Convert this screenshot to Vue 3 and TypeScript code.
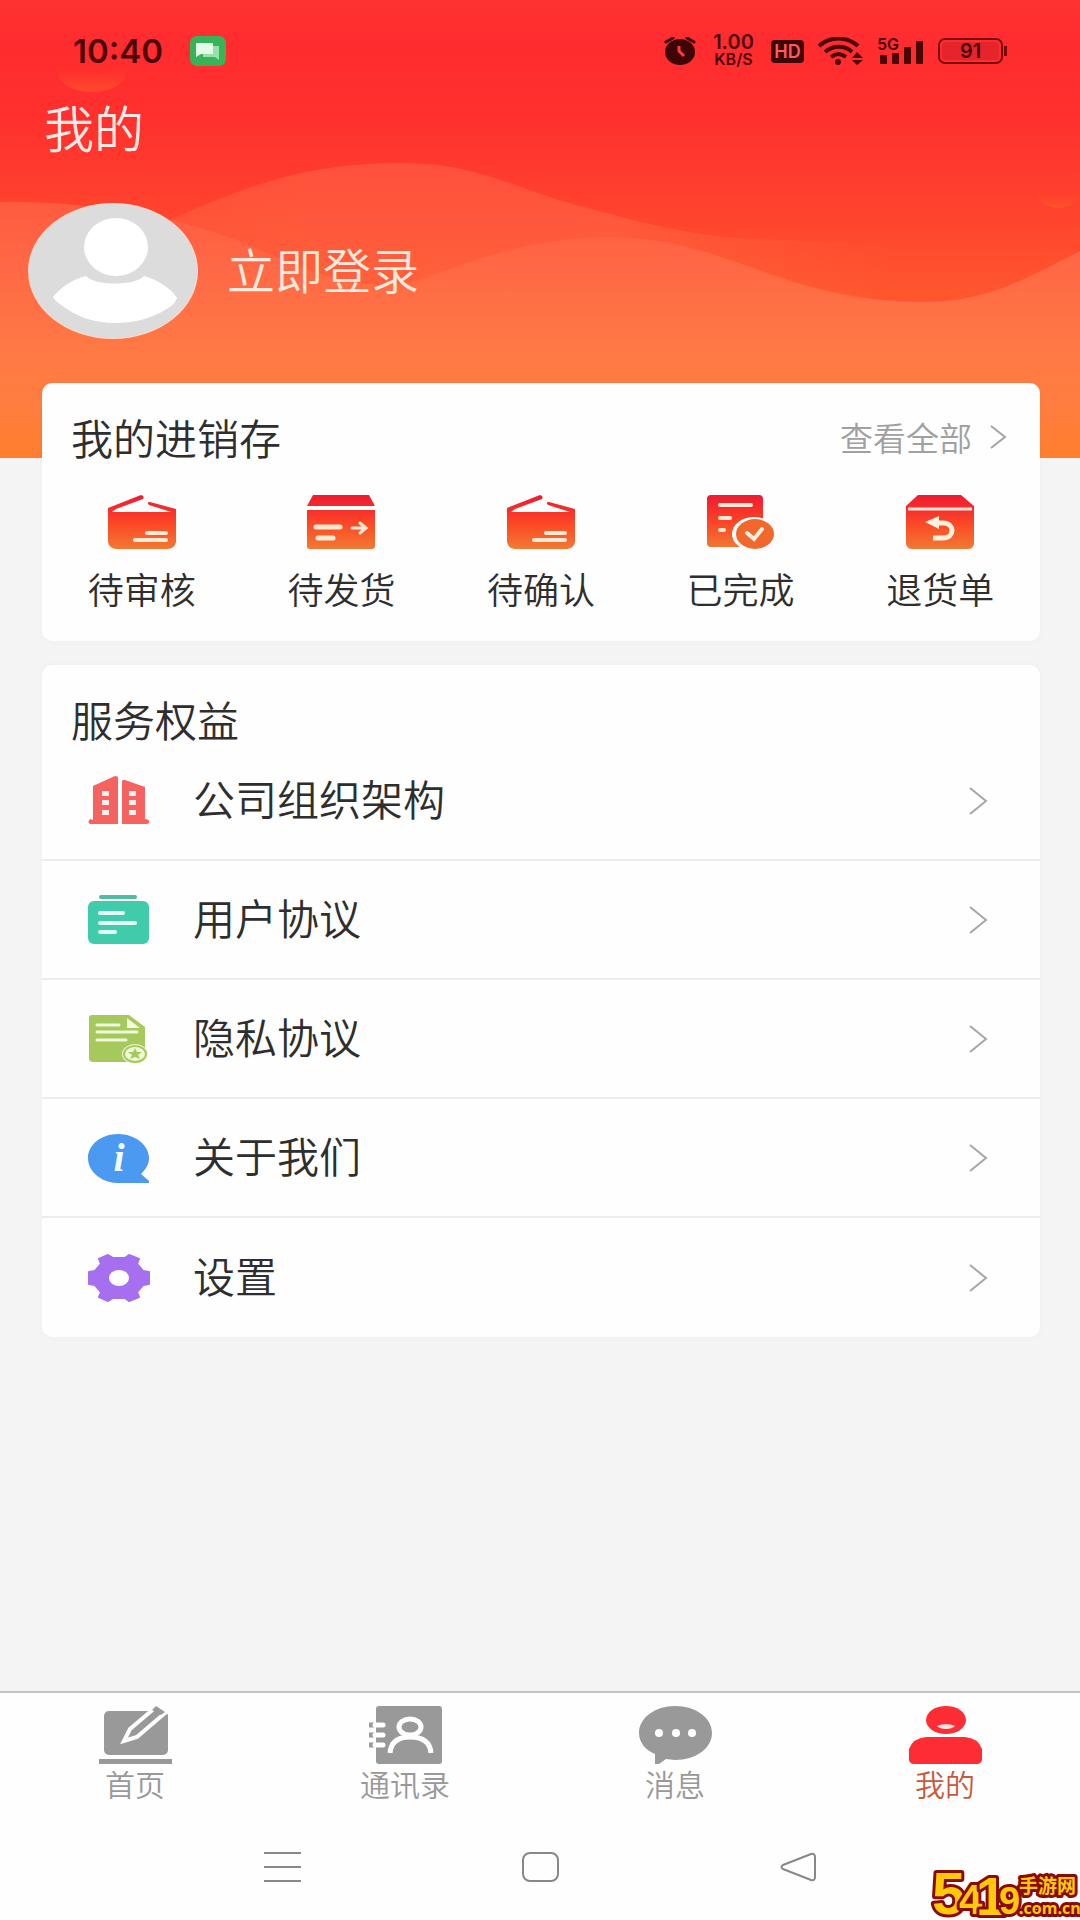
<script setup lang="ts">
type OrderIcon = 'box' | 'ship' | 'done' | 'back'
type ServiceIcon = 'company' | 'terms' | 'privacy' | 'about' | 'settings'
type TabIcon = 'home' | 'contacts' | 'chat' | 'me'

const orders: { label: string; icon: OrderIcon }[] = [
  { label: '待审核', icon: 'box' },
  { label: '待发货', icon: 'ship' },
  { label: '待确认', icon: 'box' },
  { label: '已完成', icon: 'done' },
  { label: '退货单', icon: 'back' },
]

const services: { label: string; icon: ServiceIcon }[] = [
  { label: '公司组织架构', icon: 'company' },
  { label: '用户协议', icon: 'terms' },
  { label: '隐私协议', icon: 'privacy' },
  { label: '关于我们', icon: 'about' },
  { label: '设置', icon: 'settings' },
]

const tabs: { label: string; icon: TabIcon; active?: boolean }[] = [
  { label: '首页', icon: 'home' },
  { label: '通讯录', icon: 'contacts' },
  { label: '消息', icon: 'chat' },
  { label: '我的', icon: 'me', active: true },
]
</script>

<template>
  <div class="app">
    <header class="hero">
      <svg class="hero-bg" viewBox="0 0 1080 458" preserveAspectRatio="none" aria-hidden="true">
        <defs>
          <linearGradient id="sky" x1="0" y1="0" x2="0" y2="458" gradientUnits="userSpaceOnUse">
            <stop offset="0" stop-color="#ff3232" />
            <stop offset="0.1" stop-color="#ff2c2f" />
            <stop offset="0.25" stop-color="#ff302e" />
            <stop offset="0.42" stop-color="#ff3f2d" />
            <stop offset="0.66" stop-color="#ff582d" />
            <stop offset="1" stop-color="#ff7e2d" />
          </linearGradient>
          <linearGradient id="hillFar" x1="150" y1="0" x2="930" y2="0" gradientUnits="userSpaceOnUse">
            <stop offset="0" stop-color="#ff7450" stop-opacity="0.3" />
            <stop offset="0.2" stop-color="#ff7450" stop-opacity="0.4" />
            <stop offset="0.6" stop-color="#ff7450" stop-opacity="0.4" />
            <stop offset="0.95" stop-color="#ff7450" stop-opacity="0" />
          </linearGradient>
          <linearGradient id="hillNear" x1="0" y1="200" x2="0" y2="458" gradientUnits="userSpaceOnUse">
            <stop offset="0" stop-color="#ff5a40" />
            <stop offset="0.25" stop-color="#ff6845" />
            <stop offset="0.6" stop-color="#ff7a45" />
            <stop offset="0.78" stop-color="#ff7d40" />
            <stop offset="1" stop-color="#ff7f2e" />
          </linearGradient>
          <linearGradient id="spot" x1="0" y1="0" x2="0" y2="1">
            <stop offset="0.4" stop-color="#ff5a2a" stop-opacity="0" />
            <stop offset="1" stop-color="#ff5a2a" stop-opacity="0.6" />
          </linearGradient>
        </defs>
        <rect width="1080" height="458" fill="url(#sky)" />
        <ellipse cx="92" cy="72" rx="34" ry="20" fill="url(#spot)" />
        <ellipse cx="1058" cy="196" rx="20" ry="12" fill="url(#spot)" />
        <path d="M150 228C230 195 290 163 400 163C480 163 510 188 580 206C650 224 690 238 780 240L930 246V330H150Z" fill="url(#hillFar)" />
        <path d="M0 202C70 200 180 214 250 246C300 268 360 296 420 280C470 262 530 237 610 237C730 238 780 302 925 302C990 302 1030 276 1080 251V458H0Z" fill="url(#hillNear)" />
      </svg>

      <div class="status">
        <div class="status-side">
          <span class="clock">10:40</span>
          <svg width="36" height="30" viewBox="0 0 36 30" aria-hidden="true">
            <rect width="36" height="30" rx="7" fill="#36b457" />
            <path d="M17 10H29V24L25 21H13V18H20Z" fill="#9be0a8" />
            <path d="M6 7H23V18H11L6 21Z" fill="#e4fbe6" />
          </svg>
        </div>
        <div class="status-side indicators">
          <svg width="32" height="28" viewBox="0 0 32 28" aria-hidden="true">
            <ellipse cx="16" cy="15" rx="15" ry="13" fill="#3d0506" />
            <path d="M2 5L9 1M23 1L30 5" stroke="#3d0506" stroke-width="3" stroke-linecap="round" />
            <path d="M15 9V14L20 19" fill="none" stroke="#ff3b3b" stroke-width="3" />
          </svg>
          <div class="speed"><span class="speed-num">1.00</span><span class="speed-unit">KB/S</span></div>
          <span class="hd">HD</span>
          <svg width="45" height="28" viewBox="0 0 45 28" aria-hidden="true">
            <g fill="none" stroke="#4a0607" stroke-width="4">
              <path d="M1 9C12 -1 29 -1 40 9" />
              <path d="M7 15C15 8 27 8 34 15" />
              <path d="M13 20C18 16 23 16 28 20" />
            </g>
            <circle cx="20" cy="25" r="3" fill="#4a0607" />
            <path d="M34 21L39 15L45 21ZM34 23L39 28L45 23Z" fill="#4a0607" />
          </svg>
          <svg class="signal" width="47" height="28" viewBox="0 0 47 28" aria-hidden="true">
            <text x="0" y="13" class="net">5G</text>
            <path d="M3 18h7v9h-7zM15 16h7v11h-7zM27 10h7v17h-7zM39 4h7v23h-7z" fill="#4a0607" />
          </svg>
          <div class="battery"><span class="battery-box"><span class="battery-fill">91</span></span><i class="battery-tip"></i></div>
        </div>
      </div>

      <h1 class="title">我的</h1>

      <a class="profile" href="#login">
        <svg width="170" height="136" viewBox="0 0 170 136" aria-hidden="true">
          <ellipse cx="85" cy="68" rx="85" ry="68" fill="#ffd9c8" />
          <ellipse cx="85" cy="68" rx="84" ry="67" fill="#dcdcdc" />
          <ellipse cx="88" cy="44" rx="32" ry="29" fill="#fff" />
          <path d="M25 94C34 83 46 76 58 73C66 83 108 83 116 73C130 77 144 86 149 95C147 101 142 104 137 107C122 116 105 120 87 120C69 120 52 115 39 106C33 102 27 98 25 94Z" fill="#fff" />
        </svg>
        <span class="label">立即登录</span>
      </a>
    </header>

    <main class="content">
      <section class="card orders">
        <div class="card-head">
          <h2>我的进销存</h2>
          <a class="more" href="#orders">
            查看全部
            <svg width="17" height="24" viewBox="0 0 17 24" aria-hidden="true">
              <path d="M1 1L15 12L1 23" fill="none" stroke="#a3a3a3" stroke-width="2" />
            </svg>
          </a>
        </div>
        <div class="order-grid">
          <button v-for="item in orders" :key="item.label" type="button" class="order">
            <svg width="68" height="54" viewBox="0 0 68 54" aria-hidden="true">
              <defs>
                <linearGradient id="fire" x1="0" y1="0" x2="0" y2="54" gradientUnits="userSpaceOnUse">
                  <stop offset="0" stop-color="#ec1c33" />
                  <stop offset="0.25" stop-color="#f62d2b" />
                  <stop offset="0.55" stop-color="#fb4a26" />
                  <stop offset="1" stop-color="#f17a34" />
                </linearGradient>
              </defs>
              <g v-if="item.icon === 'box'">
                <path d="M0 13L33 0Q37 1 35 4L8 14L4 17H63L41 10Q38 7 42 7L68 14V47Q67 53 60 54H8Q1 53 0 47Z" fill="url(#fire)" />
                <path d="M39 38H58M27 45H58" stroke="#ffe9d2" stroke-width="4" stroke-linecap="round" />
              </g>
              <g v-else-if="item.icon === 'ship'">
                <path d="M6 0H62L68 11H0ZM0 15H68V51Q68 54 65 54H3Q0 54 0 51Z" fill="url(#fire)" />
                <g stroke="#ffe9d2" stroke-linecap="round" fill="none">
                  <path d="M9 32H33M11 43H26" stroke-width="5" />
                  <path d="M45 33H58M53 28L59 33L53 38" stroke-width="3" />
                </g>
              </g>
              <g v-else-if="item.icon === 'done'">
                <rect width="56" height="52" rx="4" fill="url(#fire)" />
                <path d="M13 10H44M13 23H23M13 35H17" stroke="#ffe9d2" stroke-width="4" stroke-linecap="round" />
                <ellipse cx="47" cy="39" rx="22" ry="17" fill="#fff" />
                <ellipse cx="48" cy="39" rx="19" ry="15" fill="#f2682c" />
                <path d="M40 38L47 44L55 34" fill="none" stroke="#fff0e0" stroke-width="4" stroke-linecap="round" />
              </g>
              <g v-else>
                <path d="M12 0H55L68 11V49Q67 54 62 54H6Q1 54 0 49V11Z" fill="url(#fire)" />
                <path d="M2 14H66" stroke="#ffe3dc" stroke-width="3" />
                <path d="M19 27L33 21V34Z" fill="#fff0dc" />
                <path d="M30 28H37C49 28 49 43 37 43H27" fill="none" stroke="#fff0dc" stroke-width="5" />
              </g>
            </svg>
            <span>{{ item.label }}</span>
          </button>
        </div>
      </section>

      <section class="card services">
        <div class="card-head"><h2>服务权益</h2></div>
        <nav class="service-list">
          <a v-for="item in services" :key="item.label" class="service" :href="'#' + item.icon">
            <svg width="62" height="50" viewBox="0 0 62 50" aria-hidden="true">
              <g v-if="item.icon === 'company'">
                <path d="M5 44V10L27 0Q30 0 30 2V48H2Q-1 46 2 43ZM34 5Q35 3 37 4L57 11V43Q62 43 61 47L59 48H34Z" fill="#f5625f" />
                <path d="M14 15h7v5h-7zM14 24h7v5h-7zM14 34h7v5h-7zM41 15h7v5h-7zM41 24h7v5h-7zM41 34h7v5h-7z" fill="#ffeceb" />
              </g>
              <g v-else-if="item.icon === 'terms'">
                <rect x="11" y="0" width="38" height="4" rx="2" fill="#4fbd9f" />
                <rect x="0" y="6" width="61" height="43" rx="6" fill="#40ccab" />
                <path d="M12 18H35M12 28H47M12 37H27" stroke="#e2fff6" stroke-width="4" stroke-linecap="round" />
              </g>
              <g v-else-if="item.icon === 'privacy'">
                <path d="M4 1H41L57 13V44Q57 48 52 48H5Q1 48 1 44V4Q1 1 4 1Z" fill="#a5c95d" />
                <path d="M39 4V14H52Z" fill="#f4fbe0" />
                <path d="M9 11H31M9 18H49M9 26H38" stroke="#f1f9da" stroke-width="3" stroke-linecap="round" />
                <ellipse cx="47" cy="40" rx="13" ry="10" fill="#f1f9da" />
                <ellipse cx="47" cy="40" rx="11" ry="8" fill="#f1f9da" stroke="#a5c95d" stroke-width="2" />
                <path d="M47 34L49 38L54 38L50 41L52 45L47 43L42 45L44 41L40 38L45 38Z" fill="#a5c95d" />
              </g>
              <g v-else-if="item.icon === 'about'">
                <path d="M30 1C47 1 61 12 61 25C61 32 57 37 53 41L61 48V50H29C12 49 0 38 0 25C0 12 13 1 30 1Z" fill="#4b99f0" />
                <text x="31" y="38" class="info">i</text>
              </g>
              <g v-else>
                <path d="M1 19L7 18L13 11L11 6L20 2L25 5H37L41 2L51 6L49 11L55 18L61 19V31L55 32L49 39L51 44L41 48L37 45H25L20 48L11 44L13 39L7 32L1 31Z" fill="#a56ff0" stroke="#a56ff0" stroke-width="2" stroke-linejoin="round" />
                <ellipse cx="31" cy="25" rx="10" ry="8" fill="#fff" />
              </g>
            </svg>
            <span class="label">{{ item.label }}</span>
            <svg class="chevron" width="21" height="30" viewBox="0 0 21 30" aria-hidden="true">
              <path d="M2 2L18 15L2 28" fill="none" stroke="#a6a6a6" stroke-width="2" />
            </svg>
          </a>
        </nav>
      </section>
    </main>

    <footer class="bottom">
      <nav class="tabs">
        <a v-for="tab in tabs" :key="tab.label" class="tab" :class="{ active: tab.active }" :href="'#' + tab.icon">
          <svg width="73" height="58" viewBox="0 0 73 58" aria-hidden="true">
            <g v-if="tab.icon === 'home'" fill="#999">
              <rect x="5" y="5" width="64" height="44" rx="5" />
              <rect x="0" y="53" width="73" height="5" />
              <path d="M25 35L31 23L57 1L66 7L38 31Z" stroke="#fff" stroke-width="4" />
              <path d="M53 4L57 0L66 6L62 9Z" />
            </g>
            <g v-else-if="tab.icon === 'contacts'">
              <rect x="7" y="0" width="66" height="58" rx="3" fill="#999" />
              <path d="M0 19H5M0 29H5M0 39H5" stroke="#999" stroke-width="5" />
              <path d="M6 19H14M6 29H14M6 39H14" stroke="#fff" stroke-width="5" stroke-linecap="round" />
              <g fill="none" stroke="#fff" stroke-width="5">
                <ellipse cx="41" cy="21" rx="11" ry="8" />
                <path d="M21 47C22 35 30 31 41 31S61 35 62 47" />
              </g>
            </g>
            <g v-else-if="tab.icon === 'chat'">
              <path d="M36 0C57 0 73 12 73 27S57 54 36 54L27 53L20 58H16V48C6 44 0 36 0 27C0 12 16 0 36 0Z" fill="#999" />
              <g fill="#fff"><circle cx="20" cy="27" r="4" /><circle cx="37" cy="27" r="4" /><circle cx="53" cy="27" r="4" /></g>
            </g>
            <g v-else fill="#fe2c33">
              <ellipse cx="37" cy="14" rx="20" ry="14" />
              <path d="M28 20Q37 16 46 20Q43 23 37 23T28 20Z" fill="#ffe2e0" />
              <path d="M17 31H56Q69 32 73 43V54Q72 58 68 58H5Q1 58 0 54V43Q4 32 17 31Z" />
            </g>
          </svg>
          <span>{{ tab.label }}</span>
        </a>
      </nav>
      <div class="system">
        <button type="button" aria-label="Recent apps">
          <svg width="37" height="32" viewBox="0 0 37 32"><path d="M0 2H37M0 16H37M0 30H37" stroke="#888" stroke-width="2" /></svg>
        </button>
        <button type="button" aria-label="Home">
          <svg width="37" height="32" viewBox="0 0 37 32"><rect x="1" y="2" width="35" height="28" rx="7" fill="none" stroke="#888" stroke-width="2" /></svg>
        </button>
        <button type="button" aria-label="Back">
          <svg width="37" height="32" viewBox="0 0 37 32"><path d="M3 14L31 3Q35 2 35 6V26Q35 30 31 29L3 18Q0 16 3 14Z" fill="none" stroke="#888" stroke-width="2" /></svg>
        </button>
        <svg class="mark" width="150" height="54" viewBox="0 0 150 54" role="img" aria-label="5419手游网.com.cn">
          <g class="mark-text">
            <g class="mark-digits">
              <text x="2" y="48" font-size="60">5</text>
              <text x="29" y="48" font-size="42">4</text>
              <text x="46" y="49" font-size="54">1</text>
              <text x="69" y="48" font-size="38">9</text>
            </g>
            <text x="89" y="27" font-size="19">手游网</text>
            <text x="89" y="48" font-size="16">.com.cn</text>
          </g>
        </svg>
      </div>
    </footer>
  </div>
</template>

<style>
body {
  margin: 0;
  background: #f4f4f4;
}
</style>

<style scoped>
.app {
  display: flex;
  flex-direction: column;
  min-height: 100vh;
  background: #f4f4f4;
  color: #2e2e2e;
  font-family: 'Noto Sans CJK SC', sans-serif;
  font-weight: 350;
}
svg {
  display: block;
  flex: none;
}
a {
  color: inherit;
  text-decoration: none;
}
button {
  padding: 0;
  border: 0;
  background: none;
  color: inherit;
  font: inherit;
}
h1,
h2 {
  margin: 0;
  font-weight: 350;
}
.hero {
  position: relative;
  padding-bottom: 119px;
}
.hero-bg {
  position: absolute;
  inset: 0;
  width: 100%;
  height: 100%;
}
.status,
.title,
.profile {
  position: relative;
}
.status {
  display: flex;
  align-items: center;
  justify-content: space-between;
  height: 102px;
  padding: 0 73px;
  color: #4a0607;
  font-family: Inter, sans-serif;
  font-weight: 600;
}
.status-side {
  display: flex;
  align-items: center;
  gap: 27px;
}
.indicators {
  gap: 14px;
}
.clock {
  font-size: 33px;
  line-height: 36px;
}
.speed {
  display: flex;
  flex-direction: column;
  align-items: center;
  width: 47px;
  line-height: 17px;
}
.speed-num {
  font-size: 20px;
}
.speed-unit {
  font-size: 16px;
}
.hd {
  width: 33px;
  border-radius: 4px;
  background: #3d0506;
  color: #ff5a5c;
  font-size: 18px;
  line-height: 23px;
  text-align: center;
}
.signal {
  overflow: visible;
}
.net {
  fill: #4a0607;
  font-size: 16px;
}
.battery {
  display: flex;
  align-items: center;
  gap: 1px;
}
.battery-box {
  box-sizing: border-box;
  width: 65px;
  height: 26px;
  padding: 2px;
  border: 2px solid #7a0b0d;
  border-radius: 7px;
}
.battery-fill {
  display: block;
  border-radius: 4px;
  background: #e6252a;
  font-size: 20px;
  line-height: 18px;
  text-align: center;
}
.battery-tip {
  width: 3px;
  height: 10px;
  background: #7a0b0d;
}
.title {
  padding: 0 44px;
  color: #ffe9e4;
  font-size: 50px;
  line-height: 48px;
}
.profile {
  display: flex;
  align-items: center;
  gap: 29px;
  margin: 53px 28px 0;
  color: #ffe9de;
  font-size: 48px;
  line-height: 56px;
}
.label {
  padding-bottom: 6px;
}
.content {
  display: flex;
  flex: 1;
  flex-direction: column;
  gap: 24px;
  margin-top: -75px;
  padding: 0 40px 40px 42px;
}
.card {
  position: relative;
  border-radius: 10px;
  background: #fefefe;
  box-shadow: 0 0 6px rgba(0, 0, 0, 0.03);
}
.card-head {
  display: flex;
  align-items: center;
  justify-content: space-between;
  padding: 34px 33px 3px 29px;
  line-height: 40px;
}
h2 {
  font-size: 42px;
}
.more {
  display: flex;
  align-items: center;
  gap: 18px;
  color: #a0a0a0;
  font-size: 33px;
}
.order-grid {
  display: grid;
  grid-template-columns: repeat(5, 1fr);
  padding: 35px 0 32px;
}
.order {
  display: flex;
  flex-direction: column;
  align-items: center;
  gap: 18px;
  font-size: 36px;
  line-height: 42px;
}
.service {
  display: flex;
  align-items: center;
  gap: 43px;
  box-sizing: border-box;
  height: 119px;
  padding: 0 51px 0 46px;
  border-bottom: 2px solid #ececec;
  font-size: 42px;
  line-height: 56px;
}
.service:last-child {
  border-bottom: 0;
}
.chevron {
  margin-left: auto;
}
.info {
  fill: #f2fbff;
  font-family: 'Liberation Serif', serif;
  font-size: 40px;
  font-style: italic;
  font-weight: 700;
  text-anchor: middle;
}
.bottom {
  border-top: 2px solid #c4c4c4;
  background: #fefefe;
}
.tabs {
  display: grid;
  grid-template-columns: repeat(4, 1fr);
  padding: 13px 0 14px;
}
.tab {
  display: flex;
  flex-direction: column;
  align-items: center;
  gap: 2px;
  color: #999;
  font-size: 30px;
  line-height: 34px;
}
.active {
  color: #c65a3c;
}
.system {
  position: relative;
  display: flex;
  align-items: center;
  justify-content: center;
  gap: 221px;
  height: 106px;
}
.mark {
  position: absolute;
  right: 0;
  bottom: 0;
}
.mark-text {
  fill: #ffc90a;
  stroke: #8a0a08;
  stroke-width: 6px;
  stroke-linejoin: round;
  paint-order: stroke;
  font-family: 'Open Sans', 'Noto Sans CJK SC', sans-serif;
  font-weight: 700;
}
.mark-digits {
  font-family: 'Liberation Sans Narrow', 'Liberation Sans', sans-serif;
}
</style>
